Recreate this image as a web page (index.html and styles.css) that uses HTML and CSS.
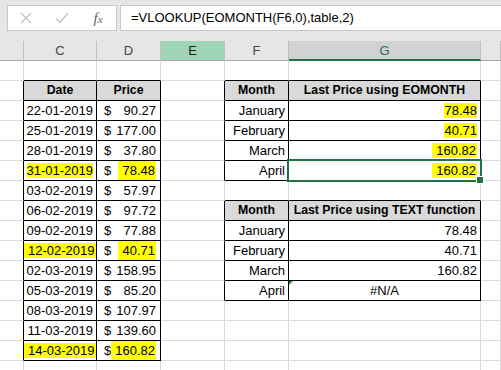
FILE: index.html
```html
<!DOCTYPE html>
<html>
<head>
<meta charset="utf-8">
<link rel="stylesheet" href="styles.css">
</head>
<body>
<div class="fbar">
  <div class="namebox">
    <div class="slot">
      <svg width="12" height="12" viewBox="0 0 12 12"><path d="M1 1L11 11M11 1L1 11" stroke="#c3c3c3" stroke-width="1.4" fill="none"/></svg>
    </div>
    <div class="slot">
      <svg width="14" height="12" viewBox="0 0 14 12"><path d="M1 6.5L5 10.5L13 1" stroke="#c3c3c3" stroke-width="1.4" fill="none"/></svg>
    </div>
    <div class="slot"><span class="fx">f<span class="fxs">x</span></span></div>
  </div>
  <div class="formula">=VLOOKUP(EOMONTH(F6,0),table,2)</div>
</div>
<div class="sheet">
  <div class="ch"></div><div class="ch">C</div><div class="ch">D</div><div class="ch che">E</div><div class="ch">F</div><div class="ch chg">G</div><div class="ch"></div>

  <div class="c"></div><div class="c kb"></div><div class="c kb"></div><div class="c"></div><div class="c kb"></div><div class="c kb"></div><div class="c"></div>

  <div class="c kr"></div><div class="c k hd">Date</div><div class="c k hd">Price</div><div class="c kr"></div><div class="c k hd">Month</div><div class="c k hd">Last Price using EOMONTH</div><div class="c"></div>

  <div class="c kr"></div><div class="c k r">22-01-2019</div><div class="c k acc"><span>$</span><span>90.27</span></div><div class="c kr"></div><div class="c k r">January</div><div class="c k r"><span class="hl">78.48</span></div><div class="c"></div>

  <div class="c kr"></div><div class="c k r">25-01-2019</div><div class="c k acc"><span>$</span><span>177.00</span></div><div class="c kr"></div><div class="c k r">February</div><div class="c k r"><span class="hl">40.71</span></div><div class="c"></div>

  <div class="c kr"></div><div class="c k r">28-01-2019</div><div class="c k acc"><span>$</span><span>37.80</span></div><div class="c kr"></div><div class="c k r">March</div><div class="c k r"><span class="hl hlw">160.82</span></div><div class="c"></div>

  <div class="c kr"></div><div class="c k r"><span class="hl">31-01-2019</span></div><div class="c k acc"><span>$</span><span class="hl hlw">78.48</span></div><div class="c kr"></div><div class="c k r">April</div><div class="c k r sel"><span class="hl hlw">160.82</span></div><div class="c"></div>

  <div class="c kr"></div><div class="c k r">03-02-2019</div><div class="c k acc"><span>$</span><span>57.97</span></div><div class="c"></div><div class="c kb"></div><div class="c kb"></div><div class="c"></div>

  <div class="c kr"></div><div class="c k r">06-02-2019</div><div class="c k acc"><span>$</span><span>97.72</span></div><div class="c kr"></div><div class="c k hd">Month</div><div class="c k hd">Last Price using TEXT function</div><div class="c"></div>

  <div class="c kr"></div><div class="c k r">09-02-2019</div><div class="c k acc"><span>$</span><span>77.88</span></div><div class="c kr"></div><div class="c k r">January</div><div class="c k r">78.48</div><div class="c"></div>

  <div class="c kr"></div><div class="c k r"><span class="hl hlw">12-02-2019</span></div><div class="c k acc"><span>$</span><span class="hl hlw">40.71</span></div><div class="c kr"></div><div class="c k r">February</div><div class="c k r">40.71</div><div class="c"></div>

  <div class="c kr"></div><div class="c k r">02-03-2019</div><div class="c k acc"><span>$</span><span>158.95</span></div><div class="c kr"></div><div class="c k r">March</div><div class="c k r">160.82</div><div class="c"></div>

  <div class="c kr"></div><div class="c k r">05-03-2019</div><div class="c k acc"><span>$</span><span>85.20</span></div><div class="c kr"></div><div class="c k r">April</div><div class="c k ctr err">#N/A</div><div class="c"></div>

  <div class="c kr"></div><div class="c k r">08-03-2019</div><div class="c k acc"><span>$</span><span>107.97</span></div><div class="c"></div><div class="c"></div><div class="c"></div><div class="c"></div>

  <div class="c kr"></div><div class="c k r">11-03-2019</div><div class="c k acc"><span>$</span><span>139.60</span></div><div class="c"></div><div class="c"></div><div class="c"></div><div class="c"></div>

  <div class="c kr"></div><div class="c k r"><span class="hl hlw">14-03-2019</span></div><div class="c k acc"><span>$</span><span class="hl hlw">160.82</span></div><div class="c"></div><div class="c"></div><div class="c"></div><div class="c"></div>

  <div class="c"></div><div class="c"></div><div class="c"></div><div class="c"></div><div class="c"></div><div class="c"></div><div class="c"></div>
</div>
</body>
</html>
```

FILE: styles.css
```css
* { box-sizing: border-box; }
html, body { margin: 0; padding: 0; }
body {
  width: 501px;
  height: 370px;
  overflow: hidden;
  background: #fff;
  font-family: "Liberation Sans", Arial, sans-serif;
  font-size: 13px;
  color: #000;
}
.fbar {
  height: 41px;
  background: #e6e6e6;
  display: flex;
  align-items: flex-start;
  gap: 3px;
  padding: 5px 0 0 7px;
}
.namebox {
  width: 110px;
  height: 26px;
  background: #fff;
  border: 1px solid #c8c8c8;
  display: flex;
}
.slot {
  width: 36px;
  display: flex;
  align-items: center;
  justify-content: center;
}
.fx {
  font-family: "Liberation Serif", serif;
  font-style: italic;
  font-size: 15px;
  color: #666;
  line-height: 1;
}
.fxs { font-size: 11px; }
.formula {
  flex: 1;
  height: 26px;
  background: #fff;
  border: 1px solid #c8c8c8;
  border-right: none;
  padding-left: 10px;
  line-height: 24px;
  white-space: nowrap;
}
.sheet {
  display: grid;
  grid-template-columns: 24px 73px 64px 64px 64px 192px 1fr;
  grid-auto-rows: 20px;
}
.ch {
  background: #e6e6e6;
  border-right: 1px solid #bfbfbf;
  border-bottom: 1px solid #ababab;
  text-align: center;
  line-height: 19px;
  color: #444;
}
.che { background: #9fd5b7; color: #222; }
.chg { background: #d2d2d2; color: #217346; border-bottom: 2px solid #217346; }
.c {
  border-right: 1px solid #dadada;
  border-bottom: 1px solid #dadada;
  line-height: 19px;
  white-space: nowrap;
}
.k { border-color: #000; }
.kr { border-right-color: #000; }
.kb { border-bottom-color: #000; }
.hd {
  background: #d9d9d9;
  font-weight: bold;
  font-size: 12.3px;
  text-align: center;
}
.r { text-align: right; padding-right: 3px; }
.ctr { text-align: center; }
.acc {
  display: flex;
  justify-content: space-between;
  padding: 0 4px 0 7px;
}
.hl { background: #ffff00; }
.hlw { padding: 0 1px 0 4px; }
.sel { position: relative; }
.sel::after {
  content: "";
  position: absolute;
  top: -2px;
  left: -2px;
  right: -2px;
  bottom: -2px;
  border: 2px solid #217346;
}
.sel::before {
  content: "";
  position: absolute;
  right: -4px;
  bottom: -4px;
  width: 6px;
  height: 6px;
  background: #217346;
  border: 1px solid #fff;
  z-index: 1;
}
.err { position: relative; }
.err::before {
  content: "";
  position: absolute;
  left: 0;
  top: 0;
  border-top: 4px solid #1e8c3e;
  border-right: 4px solid transparent;
}
```
